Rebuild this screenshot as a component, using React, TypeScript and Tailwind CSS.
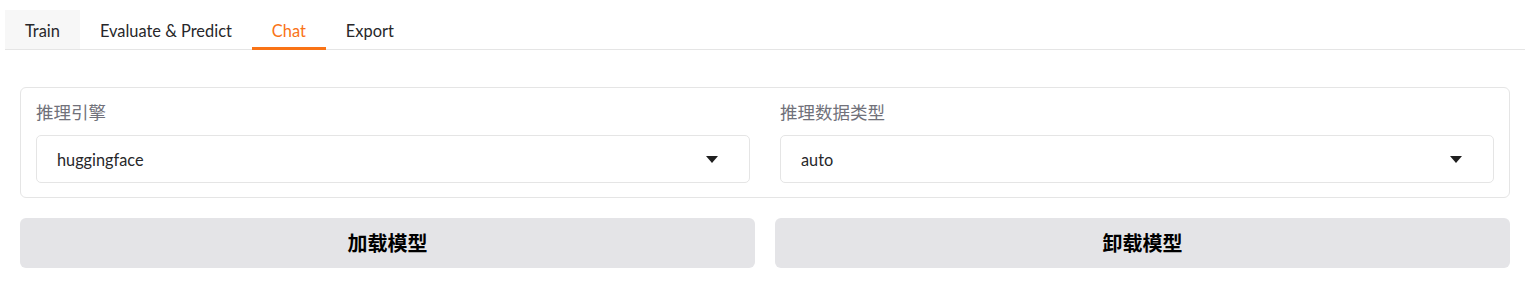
import React, { useState } from "react";

const tabs = ["Train", "Evaluate & Predict", "Chat", "Export"];

const font = { fontFamily: '"Source Sans Pro", Lato, "Noto Sans CJK SC", sans-serif' };

const Caret: React.FC = () => (
  <svg width="12" height="7" viewBox="0 0 12 7" className="shrink-0">
    <path d="M0 0 L12 0 L6 7 Z" fill="#1f1f1f" />
  </svg>
);

const SelectField: React.FC<{ label: string; value: string }> = ({ label, value }) => (
  <div className="flex-1 flex flex-col">
    <span className="text-[17.5px] leading-[20px] text-[#71717a] mb-[12px] pt-[2px]">{label}</span>
    <div className="h-[48px] border border-[#e5e5e5] rounded-[5px] bg-white flex items-center justify-between pl-[20px] pr-[31px]">
      <span className="text-[16.3px] text-[#27272a] pt-[2px]">{value}</span>
      <Caret />
    </div>
  </div>
);

export default function App() {
  const [active, setActive] = useState("Chat");

  return (
    <div className="w-[1530px] h-[286px] bg-white px-[5px] pt-[10px]" style={font}>
      {/* Tab bar */}
      <div className="flex border-b border-[#e5e5e5] h-[40px]">
        {tabs.map((t) => (
          <button
            key={t}
            type="button"
            onClick={() => setActive(t)}
            className={`relative px-[20px] pt-[3px] h-[39px] text-[16.4px] ${
              t === "Train" ? "bg-[#f7f7f7]" : ""
            } ${t === active ? "text-[#f97316]" : "text-[#27272a]"}`}
          >
            {t}
            {t === active && (
              <span className="absolute left-0 right-0 bottom-[-1px] h-[3px] bg-[#f97316]" />
            )}
          </button>
        ))}
      </div>

      <div className="px-[15px] pt-[37px]">
        {/* Settings panel */}
        <div className="border border-[#e5e5e5] rounded-[6px] px-[15px] pt-[13px] pb-[14px] flex gap-[30px]">
          <SelectField label="推理引擎" value="huggingface" />
          <SelectField label="推理数据类型" value="auto" />
        </div>

        {/* Actions */}
        <div className="flex gap-[20px] mt-[20px]">
          <button
            type="button"
            className="flex-1 h-[50px] rounded-[6px] bg-[#e4e4e7] text-[20px] font-bold text-black"
          >
            加载模型
          </button>
          <button
            type="button"
            className="flex-1 h-[50px] rounded-[6px] bg-[#e4e4e7] text-[20px] font-bold text-black"
          >
            卸载模型
          </button>
        </div>
      </div>
    </div>
  );
}
